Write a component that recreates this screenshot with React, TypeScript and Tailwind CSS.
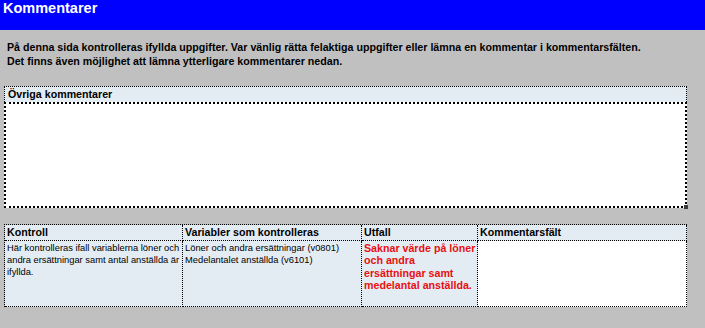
const dither = 'bg-[#e4ecf3]';

const cell = 'border-r border-b border-dotted border-black';

export default function App() {
  return (
    <div className="h-[328px] w-[705px] overflow-hidden bg-[#c0c0c0] font-['Liberation_Sans',Arial,sans-serif] text-black">
      <div className="h-[30px] bg-[#0000ff] pl-[3px] text-[14.5px] font-bold leading-[17px] text-white">
        Kommentarer
      </div>

      <div className="mt-[11px] pl-[7px] text-[10.67px] font-bold leading-[13.5px]">
        <p>
          På denna sida kontrolleras ifyllda uppgifter. Var vänlig rätta felaktiga uppgifter eller
          lämna en kommentar i kommentarsfälten.
        </p>
        <p>Det finns även möjlighet att lämna ytterligare kommentarer nedan.</p>
      </div>

      {/* övriga kommentarer */}
      <div className="relative ml-[4px] mt-[18px] w-[683px]">
        <div
          className={`h-[16px] border-x border-t border-dotted border-black pl-[3px] text-[10.67px] font-bold leading-[14px] ${dither}`}
        >
          Övriga kommentarer
        </div>
        <div className="h-[106px] border-2 border-dotted border-black bg-white" />
        <span className="absolute bottom-[-1px] right-[-1px] h-[4px] w-[4px] bg-[#3a3a3a]" />
      </div>

      {/* kontrolltabell */}
      <div className="ml-[4px] mt-[16px] grid w-[683px] grid-cols-[178px_179px_116px_209px] border-l border-t border-dotted border-black">
        <div className={`${cell} ${dither} h-[16px] pl-[2px] text-[10.67px] font-bold leading-[14px]`}>
          Kontroll
        </div>
        <div className={`${cell} ${dither} h-[16px] pl-[2px] text-[10.67px] font-bold leading-[14px]`}>
          Variabler som kontrolleras
        </div>
        <div className={`${cell} ${dither} h-[16px] pl-[2px] text-[10.67px] font-bold leading-[14px]`}>
          Utfall
        </div>
        <div className={`${cell} ${dither} h-[16px] pl-[2px] text-[10.67px] font-bold leading-[14px]`}>
          Kommentarsfält
        </div>

        <div className={`${cell} ${dither} h-[66px] pl-[2px] pr-[2px] pt-[1px] text-[9.33px] leading-[12px]`}>
          Här kontrolleras ifall variablerna löner och andra ersättningar samt antal anställda är
          ifyllda.
        </div>
        <div className={`${cell} ${dither} h-[66px] pl-[2px] pt-[1px] text-[9.33px] leading-[12px]`}>
          <div>Löner och andra ersättningar (v0801)</div>
          <div>Medelantalet anställda (v6101)</div>
        </div>
        <div
          className={`${cell} ${dither} h-[66px] pl-[2px] pr-[1px] pt-[1px] text-[10.67px] font-bold leading-[12.3px] text-[#e81010]`}
        >
          Saknar värde på löner och andra ersättningar samt medelantal anställda.
        </div>
        <div className={`${cell} h-[66px] bg-white`} />
      </div>
    </div>
  );
}
